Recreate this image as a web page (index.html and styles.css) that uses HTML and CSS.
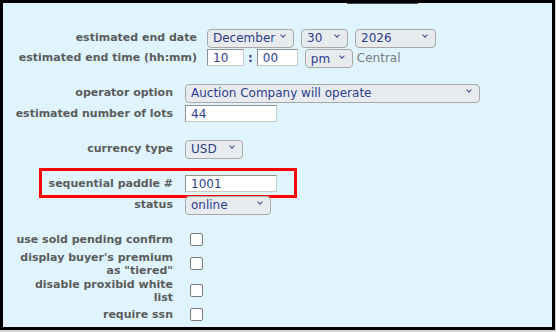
FILE: index.html
```html
<!DOCTYPE html>
<html lang="en">

<head>
    <meta charset="UTF-8">
    <title>Auction settings</title>
    <link rel="stylesheet" href="styles.css">
</head>

<body>
    <div class="frame">
        <div class="topStub"></div>

        <div class="formBlock wideLabels">
            <label class="lbl">estimated end date</label>
            <div class="ctl">
                <span class="dd w-month"><select><option>December</option></select></span>
                <span class="dd w-day"><select><option>30</option></select></span>
                <span class="dd w-year"><select><option>2026</option></select></span>
            </div>

            <label class="lbl">estimated end time (hh:mm)</label>
            <div class="ctl">
                <input class="txt w-hour" type="text" value="10">
                <span class="colon">:</span>
                <input class="txt w-min" type="text" value="00">
                <span class="dd w-ampm"><select><option>pm</option></select></span>
                <span class="zone">Central</span>
            </div>
        </div>

        <div class="formBlock">
            <label class="lbl">operator option</label>
            <div class="ctl">
                <span class="dd w-operator"><select><option>Auction Company will operate</option></select></span>
            </div>

            <label class="lbl">estimated number of lots</label>
            <div class="ctl"><input class="txt w-num" type="text" value="44"></div>
        </div>

        <div class="formBlock">
            <label class="lbl">currency type</label>
            <div class="ctl">
                <span class="dd w-currency"><select><option>USD</option></select></span>
            </div>
        </div>

        <div class="formBlock paddleBlock">
            <div class="highlight"></div>
            <label class="lbl">sequential paddle #</label>
            <div class="ctl"><input class="txt w-num" type="text" value="1001"></div>

            <label class="lbl">status</label>
            <div class="ctl">
                <span class="dd w-status"><select><option>online</option></select></span>
            </div>
        </div>

        <div class="formBlock checks">
            <label class="lbl">use sold pending confirm</label>
            <div class="ctl"><input type="checkbox"></div>

            <label class="lbl tall">display buyer's premium<br>as "tiered"</label>
            <div class="ctl tall"><input type="checkbox"></div>

            <label class="lbl tall">disable proxibid white<br>list</label>
            <div class="ctl tall"><input type="checkbox"></div>

            <label class="lbl">require ssn</label>
            <div class="ctl"><input type="checkbox"></div>

            <label class="lbl">enable bidder verification</label>
            <div class="ctl"><input type="checkbox"></div>
        </div>
    </div>
</body>

</html>
```

FILE: styles.css
```css
/* settings panel screenshot */

body {
    margin: 0;
    background-color: #d6d6d6;
    font-family: "DejaVu Sans", Verdana, sans-serif;
}

.frame {
    position: relative;
    width: 549px;
    height: 324px;
    overflow: hidden;
    border: 3px solid #000;
    background-color: #dff4fd;
}

.topStub {
    width: 71px;
    height: 1px;
    margin-left: 344px;
    background-color: #4a4a4a;
}

.formBlock {
    display: grid;
    grid-template-columns: 160px auto;
    column-gap: 12px;
    margin-top: 14px;
    margin-left: 10px;
}

.wideLabels {
    grid-template-columns: 179px auto;
    column-gap: 10px;
    margin-top: 23px;
    margin-left: 15px;
}

.lbl {
    display: flex;
    align-items: center;
    justify-content: flex-end;
    min-height: 21px;
    text-align: right;
    white-space: nowrap;
    font-size: 11px;
    font-weight: bold;
    line-height: 13px;
    color: #5c5c5c;
}

.wideLabels .lbl {
    min-height: 20px;
}

.ctl {
    display: flex;
    align-items: center;
    gap: 7px;
}

.lbl.tall,
.ctl.tall {
    min-height: 27px;
}

/* dropdowns */

.dd {
    position: relative;
    display: inline-block;
}

.dd select {
    -webkit-appearance: none;
    appearance: none;
    width: 100%;
    height: 19px;
    padding: 0 0 0 5px;
    border: 1px solid #a8a8a8;
    border-radius: 4px;
    background-color: #e8ebee;
    font-family: "DejaVu Sans", Verdana, sans-serif;
    font-size: 12px;
    color: #2d3d8e;
}

.dd::after {
    content: "";
    position: absolute;
    right: 9px;
    top: 6px;
    width: 3px;
    height: 3px;
    border-right: 1.5px solid #3a4a94;
    border-bottom: 1.5px solid #3a4a94;
    transform: rotate(45deg);
    pointer-events: none;
}

.w-month { width: 87px; }
.w-day { width: 47px; }
.w-year { width: 81px; }
.w-ampm { width: 48px; }
.w-operator { width: 295px; }
.w-currency { width: 58px; }
.w-status { width: 86px; }

/* text boxes */

.txt {
    box-sizing: border-box;
    height: 17px;
    padding: 0 0 0 5px;
    border: 1px solid #8f8f8f;
    border-right-color: #c8c8c8;
    border-bottom-color: #c8c8c8;
    background-color: #fff;
    font-family: "DejaVu Sans", Verdana, sans-serif;
    font-size: 12px;
    color: #2d3d8e;
}

.w-hour { width: 37px; }
.w-min { width: 41px; }
.w-num { width: 92px; }

.colon {
    margin: 0 -3px;
    font-size: 12px;
    font-weight: bold;
    color: #2d3d8e;
}

.zone {
    margin-left: -3px;
    font-size: 12px;
    color: #7a7a7a;
}

/* checkboxes */

.checks input[type="checkbox"] {
    -webkit-appearance: none;
    appearance: none;
    width: 13px;
    height: 13px;
    margin: 0 0 0 5px;
    border: 1px solid #7b7b7b;
    border-radius: 2px;
    background-color: #fff;
}

/* red annotation round the paddle row */

.paddleBlock {
    position: relative;
}

.highlight {
    position: absolute;
    left: 26px;
    top: -5px;
    width: 252px;
    height: 24px;
    border: 3px solid #f00;
}
```
